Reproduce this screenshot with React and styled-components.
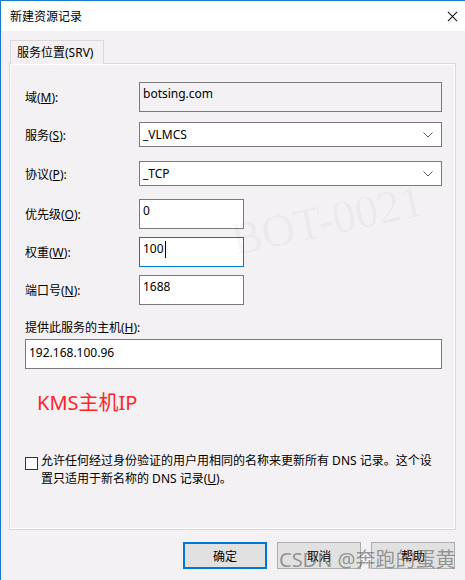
import React from "react";
import styled, { createGlobalStyle } from "styled-components";

const GlobalStyle = createGlobalStyle`
  html, body {
    margin: 0;
    padding: 0;
    background: #f4f1f4;
  }
  * {
    box-sizing: border-box;
  }
`;

const CJK = `"Noto Sans", "Noto Sans CJK SC", sans-serif`;

export default function App() {
  return (
    <Window>
      <GlobalStyle />
      <TitleBar>
        <Title>新建资源记录</Title>
        <CloseIcon viewBox="0 0 12 12">
          <path d="M1 1 L11 11 M11 1 L1 11" stroke="#111" strokeWidth="1.1" />
        </CloseIcon>
      </TitleBar>

      <Body>
        <TabStrip>
          <Tab>服务位置(SRV)</Tab>
        </TabStrip>
        <Panel>
          <Row $top={18}>
            <Label>域(<u>M</u>):</Label>
            <Input $h={30} $disabled>botsing.com</Input>
          </Row>
          <Row $top={10}>
            <Label>服务(<u>S</u>):</Label>
            <Select $h={25}>
              _VLMCS
              <Chevron />
            </Select>
          </Row>
          <Row $top={14}>
            <Label>协议(<u>P</u>):</Label>
            <Select $h={25}>
              _TCP
              <Chevron />
            </Select>
          </Row>
          <Row $top={13}>
            <Label>优先级(<u>O</u>):</Label>
            <Input $h={30} $w={105}>0</Input>
          </Row>
          <Row $top={8}>
            <Label>权重(<u>W</u>):</Label>
            <Input $h={30} $w={105} $focused>
              100<Caret />
            </Input>
          </Row>
          <Row $top={8}>
            <Label>端口号(<u>N</u>):</Label>
            <Input $h={30} $w={105}>1688</Input>
          </Row>
          <HostLabel>提供此服务的主机(<u>H</u>):</HostLabel>
          <HostInput>192.168.100.96</HostInput>
          <Note>KMS主机IP</Note>
          <CheckRow>
            <CheckBox />
            <CheckText>
              允许任何经过身份验证的用户用相同的名称来更新所有 DNS 记录。这个设置只适用于新名称的 DNS 记录(<u>U</u>)。
            </CheckText>
          </CheckRow>
        </Panel>

        <Buttons>
          <Button $primary>确定</Button>
          <Button>取消</Button>
          <Button>帮助</Button>
        </Buttons>
      </Body>

      <Watermark>BOT-0021</Watermark>
      <Credit>CSDN @奔跑的蛋黄</Credit>
    </Window>
  );
}

function Chevron() {
  return (
    <ChevronIcon viewBox="0 0 10 6">
      <path d="M0.5 0.5 L5 5 L9.5 0.5" fill="none" stroke="#555" strokeWidth="1" />
    </ChevronIcon>
  );
}

const Window = styled.div`
  position: relative;
  width: 465px;
  height: 580px;
  overflow: hidden;
  background: #f4f1f4;
  border-top: 1px solid #1a7cd1;
  border-left: 1px solid #1a7cd1;
  font-family: ${CJK};
  font-size: 12px;
  color: #000;
`;

const TitleBar = styled.div`
  height: 30px;
  background: #fff;
  display: flex;
  align-items: center;
  justify-content: space-between;
  padding: 0 7px 0 9px;
`;

const Title = styled.div`
  font-size: 12px;
`;

const CloseIcon = styled.svg`
  width: 11px;
  height: 11px;
`;

const Body = styled.div`
  padding: 9px 8px 0 8px;
`;

const TabStrip = styled.div`
  display: flex;
  padding-left: 1px;
  position: relative;
  z-index: 1;
  margin-bottom: -1px;
`;

const Tab = styled.div`
  height: 24px;
  width: 94px;
  padding: 4px 0 0 6px;
  border: 1px solid #d9d9d9;
  border-bottom: none;
  background: #f4f1f4;
  line-height: 16px;
`;

const Panel = styled.div`
  width: 447px;
  height: 467px;
  border: 1px solid #d9d9d9;
  box-shadow: inset 0 0 0 1px #fff;
  padding: 0 13px 0 15px;
  display: flex;
  flex-direction: column;
`;

const Row = styled.div`
  display: flex;
  align-items: center;
  margin-top: ${(p) => p.$top}px;
`;

const Label = styled.div`
  width: 114px;
  flex: none;
`;

const Input = styled.div`
  position: relative;
  width: ${(p) => (p.$w ? `${p.$w}px` : "304px")};
  height: ${(p) => p.$h}px;
  border: 1px solid ${(p) => (p.$focused ? "#0078d7" : "#7a7a7a")};
  background: ${(p) => (p.$disabled ? "#f4f1f4" : "#fff")};
  padding: 3px 0 0 3px;
  font-family: "Noto Sans", sans-serif;
  font-size: 12px;
  line-height: 16px;
  display: flex;
  align-items: flex-start;
`;

const Caret = styled.span`
  display: inline-block;
  width: 1px;
  height: 17px;
  background: #000;
  margin-left: 1px;
`;

const Select = styled.div`
  width: 304px;
  height: ${(p) => p.$h}px;
  border: 1px solid #7a7a7a;
  background: #fff;
  padding: 0 8px 0 3px;
  font-family: "Noto Sans", sans-serif;
  display: flex;
  align-items: center;
  justify-content: space-between;
`;

const ChevronIcon = styled.svg`
  width: 10px;
  height: 6px;
`;

const HostLabel = styled.div`
  margin-top: 13px;
`;

const HostInput = styled.div`
  margin-top: 3px;
  width: 417px;
  height: 30px;
  border: 1px solid #7a7a7a;
  background: #fff;
  padding: 5px 0 0 3px;
  font-family: "Noto Sans", sans-serif;
  line-height: 16px;
`;

const Note = styled.div`
  margin: 21px 0 0 12px;
  font-family: "Noto Sans", "Noto Sans CJK SC", sans-serif;
  font-size: 20px;
  line-height: 26px;
  color: #ff2424;
`;

const CheckRow = styled.div`
  margin-top: 36px;
  display: flex;
  align-items: flex-start;
`;

const CheckBox = styled.div`
  flex: none;
  width: 13px;
  height: 13px;
  margin-top: 5px;
  border: 1px solid #333;
  background: #fff;
`;

const CheckText = styled.div`
  width: 400px;
  padding-left: 3px;
  line-height: 18px;
`;

const Buttons = styled.div`
  display: flex;
  justify-content: flex-end;
  gap: 10px;
  padding-right: 2px;
  margin-top: 12px;
`;

const Button = styled.div`
  width: 84px;
  height: 27px;
  display: flex;
  align-items: center;
  justify-content: center;
  background: #e1e1e1;
  border: ${(p) => (p.$primary ? "2px solid #0078d7" : "1px solid #adadad")};
`;

const Watermark = styled.div`
  position: absolute;
  left: 236px;
  top: 214px;
  font-family: "Liberation Serif", serif;
  font-size: 46px;
  line-height: 50px;
  color: rgba(0, 0, 0, 0.04);
  transform: rotate(-12deg);
  transform-origin: left bottom;
  pointer-events: none;
`;

const Credit = styled.div`
  position: absolute;
  left: 278px;
  top: 545px;
  font-family: "Noto Sans", "Noto Sans CJK SC", sans-serif;
  font-size: 20px;
  line-height: 28px;
  color: rgba(80, 80, 80, 0.55);
  pointer-events: none;
  white-space: nowrap;
`;
